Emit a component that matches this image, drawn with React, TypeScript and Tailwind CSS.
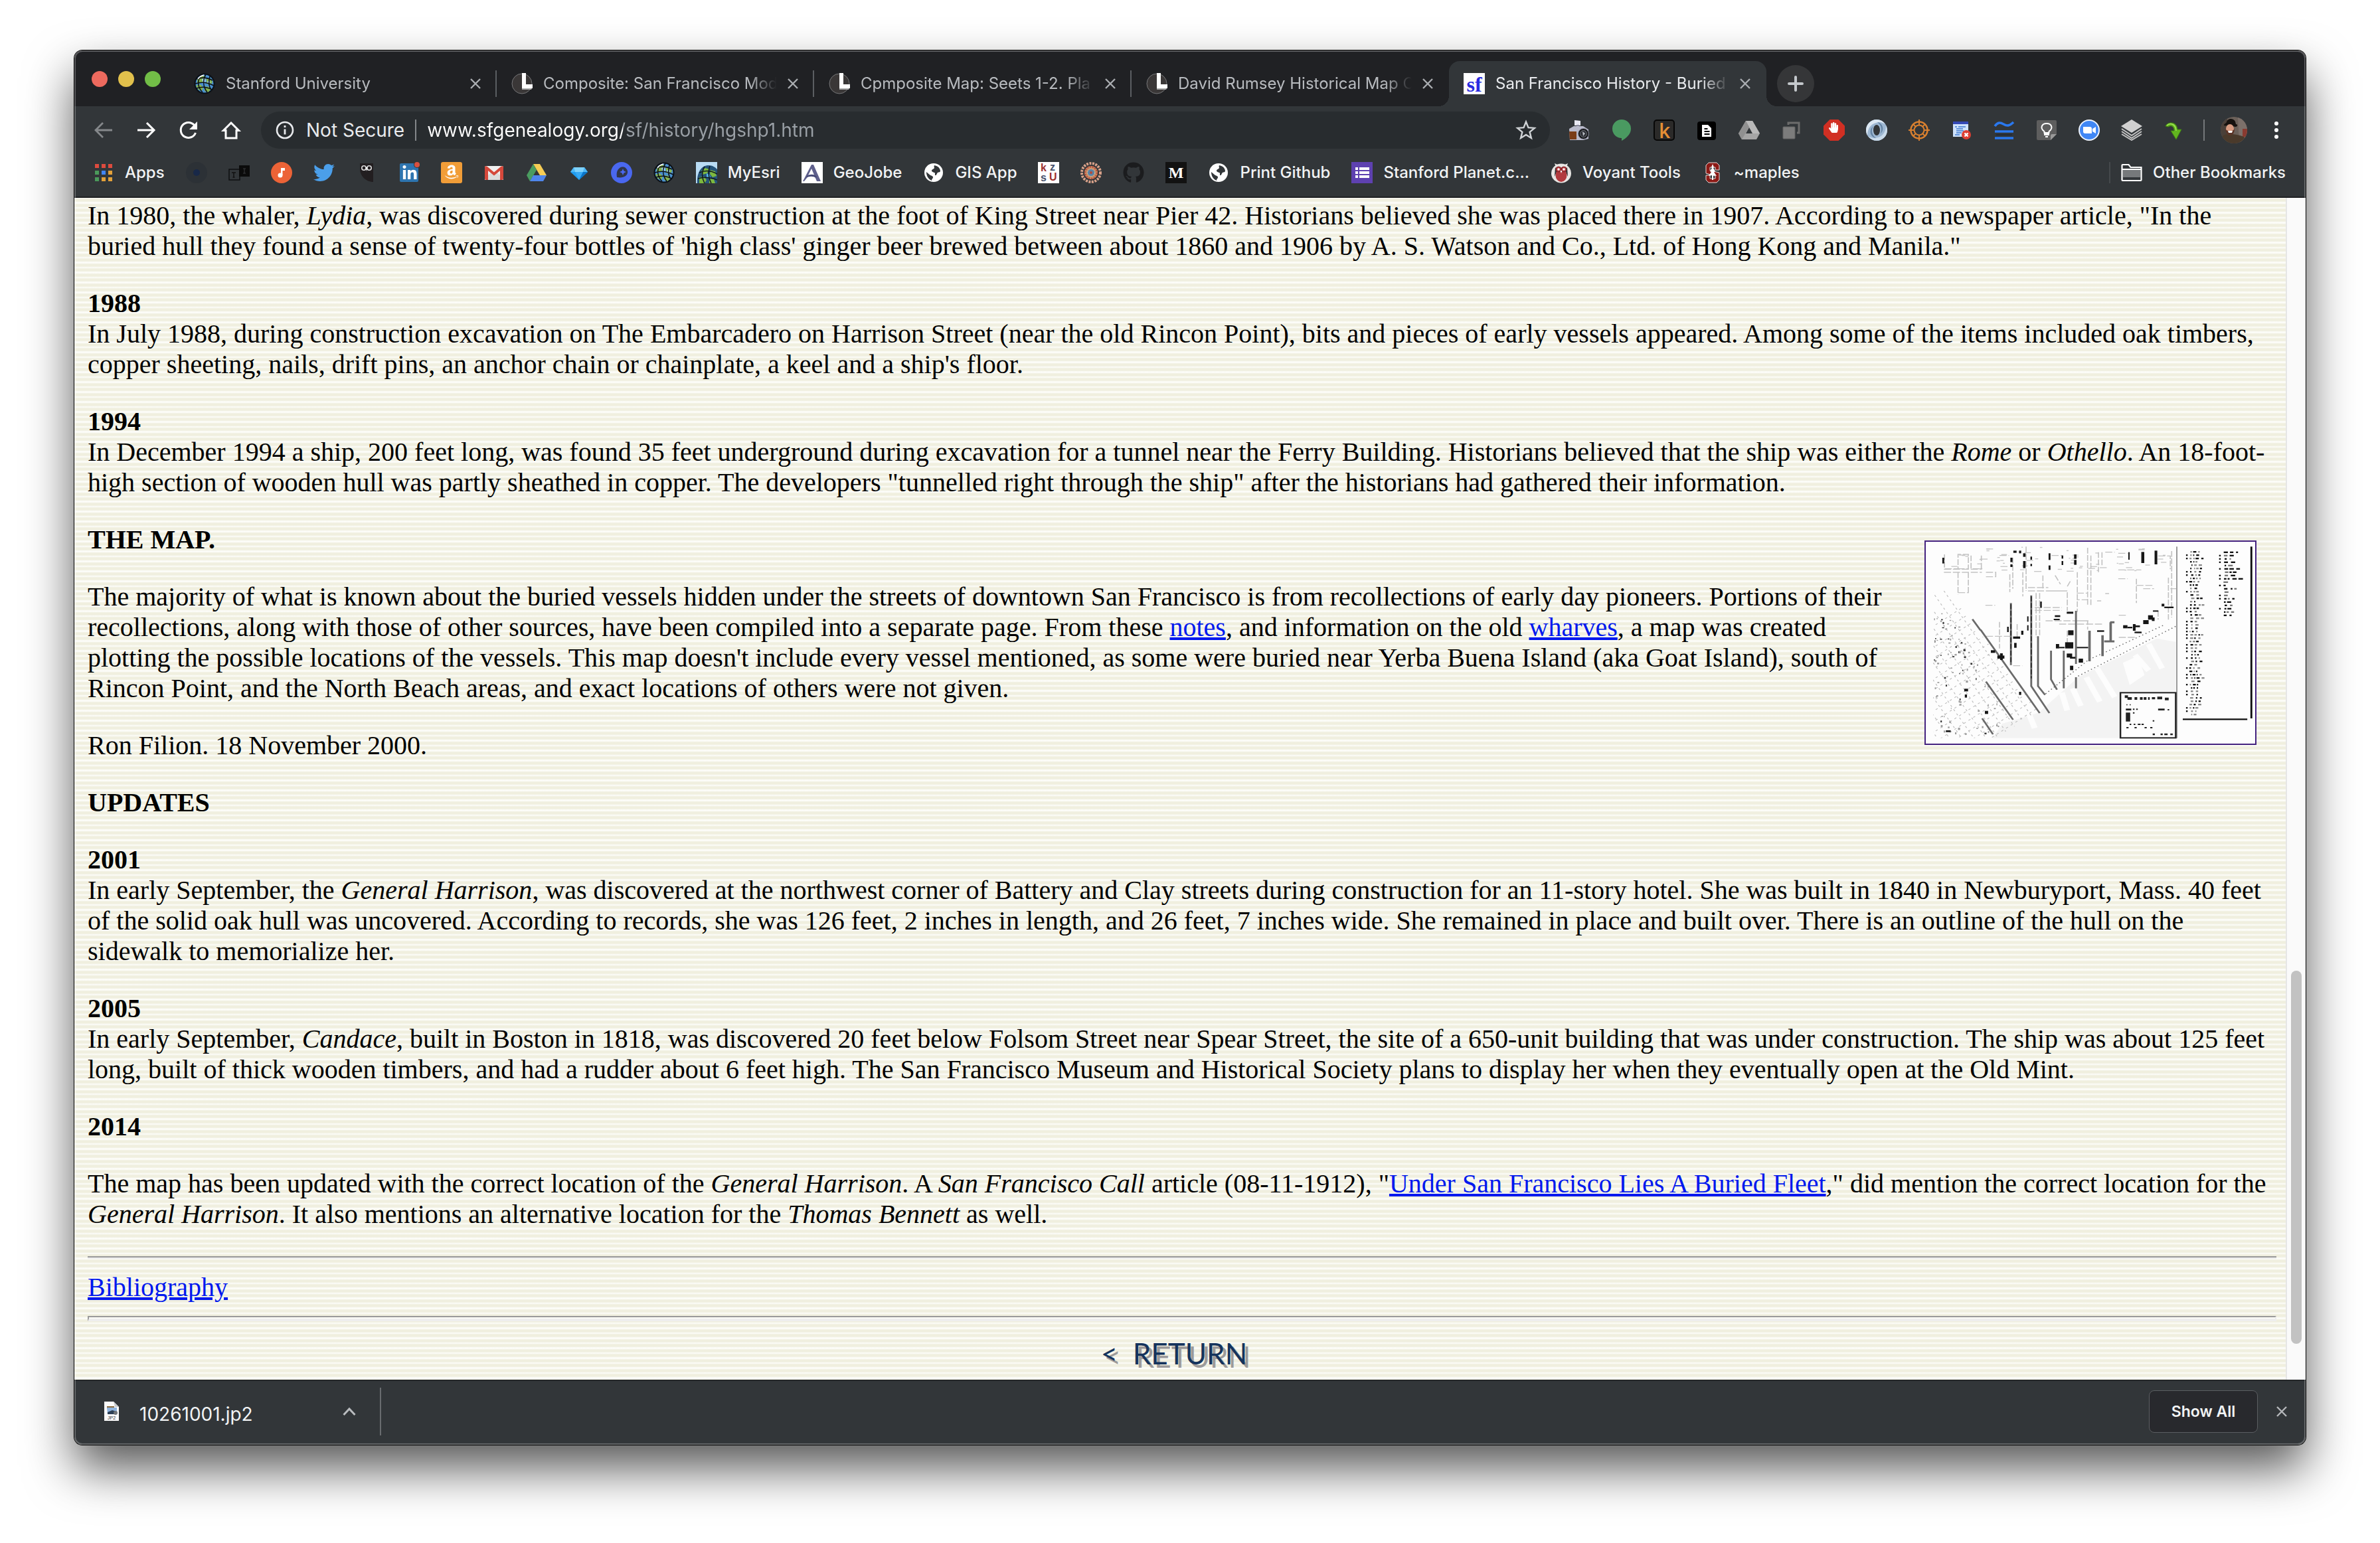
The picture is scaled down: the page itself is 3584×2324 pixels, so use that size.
import React from "react";
import { FaTwitter, FaGithub, FaHandPaper, FaAmazon, FaLinkedinIn } from "react-icons/fa";

type IconProps = { children: React.ReactNode; className?: string };

function Icon({ children, className = "size-8" }: IconProps) {
  return (
    <svg viewBox="0 0 32 32" className={`${className} shrink-0`} fill="none" aria-hidden="true">
      {children}
    </svg>
  );
}

/* ---------- favicons and bookmark icons ---------- */

function EsriGlobe() {
  return (
    <Icon>
      <circle cx="16" cy="16" r="15.5" fill="#0b1016" />
      <circle cx="16" cy="16" r="13.5" fill="#4a90cf" />
      <path d="M5 9l6-5 6 1 1 5-5 4-8 1zM19 9l6-1 3 6-4 4-5-2zM3 19l6-2 5 4-2 6-5-2zM17 20l6 1 3 3-5 5-5-2z" fill="#86b34c" />
      <path d="M12 9l5-1 1 5-4 2zM21 12l4 1-1 3-4-1z" fill="#9fd0f5" />
      <path d="M11 3C4 12 6 22 13 29M18 2c-5 9-4 19 2 27M24 5c-2 8-2 15 2 20M4 9c8-3 17-2 24 2M2 16c9-3 19-2 28 3M4 23c8-3 16-2 23 2" stroke="#0b1016" strokeWidth="1.6" />
      <path d="M6 9c2-3 5-5 9-6" stroke="#fff" strokeWidth="1.5" />
    </Icon>
  );
}

function LunaIcon() {
  return (
    <Icon>
      <circle cx="16" cy="16" r="15" fill="#3a3737" stroke="#77787a" />
      <path d="M16 0h6v17h10v6H16z" fill="#fff" />
      <path d="M16 23h15l-1 2H16z" fill="#aaa" />
    </Icon>
  );
}

function SfIcon() {
  return (
    <Icon>
      <rect width="32" height="32" fill="#fff" />
      <text x="16" y="28" textAnchor="middle" fontFamily="Liberation Serif" fontWeight="bold" fontSize="32" fill="#2a2be0">sf</text>
    </Icon>
  );
}

function AppsIcon() {
  const colors = ["#dd4b3e", "#dd4b3e", "#dd4b3e", "#4b9a5b", "#4285f4", "#e3a13a", "#4b9a5b", "#e3a13a", "#e3a13a"];
  return (
    <Icon>
      {colors.map((c, i) => (
        <rect key={i} x={3 + (i % 3) * 10} y={3 + Math.floor(i / 3) * 10} width="6" height="6" fill={c} />
      ))}
    </Icon>
  );
}

function DarkDot() {
  return (
    <Icon>
      <circle cx="16" cy="16" r="16" fill="#2c3136" />
      <circle cx="16" cy="16" r="5" fill="#182848" />
    </Icon>
  );
}

function TiIcon() {
  return (
    <Icon>
      <rect x="1" y="11" width="16" height="16" stroke="#0e0f10" strokeWidth="1.5" />
      <rect x="16" y="5" width="16" height="17" fill="#0b0b0b" />
      <path d="M5 16h6M8 16v7M6.5 23h3" stroke="#111" strokeWidth="1.5" />
      <path d="M22 10h4M24 10v7M22 17h4" stroke="#3b3d3f" />
    </Icon>
  );
}

function MusicIcon() {
  return (
    <Icon>
      <circle cx="16" cy="16" r="16" fill="#ec6337" />
      <circle cx="14" cy="20" r="3.5" fill="#fff" />
      <path d="M15 9h6v4h-3.500v7H15z" fill="#fff" />
    </Icon>
  );
}

function OwlIcon() {
  return (
    <Icon>
      <path d="M6 2h20v28c-11 0-20-9-20-20z" fill="#221e20" />
      <circle cx="12" cy="9" r="3.2" fill="#221e20" stroke="#ddd" strokeWidth="1.6" />
      <circle cx="20" cy="9" r="3.2" fill="#221e20" stroke="#ddd" strokeWidth="1.6" />
      <path d="M14.5 8h3L16 14z" fill="#fff" />
    </Icon>
  );
}

function LinkedInIcon() {
  return (
    <Icon>
      <rect x="2" y="2" width="28" height="28" rx="2" fill="#2e75b0" />
      <FaLinkedinIn x="5" y="5" width="22" height="22" color="#fff" />
      <circle cx="28" cy="4" r="5" fill="#323639" />
      <circle cx="28" cy="4" r="4" fill="#d9503f" />
    </Icon>
  );
}

function AmazonIcon() {
  return (
    <Icon>
      <rect width="32" height="32" rx="3" fill="#f19d38" />
      <FaAmazon x="4" y="3" width="24" height="27" color="#fff" />
    </Icon>
  );
}

function GmailIcon() {
  return (
    <Icon>
      <rect x="2" y="6" width="28" height="21" rx="2" fill="#f0f0f0" />
      <path d="M2 25l10-10 4 3 4-3 10 10v2H2z" fill="#dcdcdc" />
      <path d="M4 8l12 10L28 8" stroke="#d5483b" strokeWidth="4" />
      <path d="M2 8q0-2 2-2l3 3v18H4q-2 0-2-2zM30 8q0-2-2-2l-3 3v18h3q2 0 2-2z" fill="#d5483b" />
    </Icon>
  );
}

function DriveIcon() {
  return (
    <Icon>
      <path d="M11 3h10l10 17H21z" fill="#f6cd55" />
      <path d="M11 3l5 9L6 29 1 20z" fill="#4a9c60" />
      <path d="M11 20h20l-5 9H6z" fill="#4f86ec" />
    </Icon>
  );
}

function DiamondIcon() {
  return (
    <Icon>
      <path d="M8 8h16l5 7-13 12L3 15z" fill="#1e9cf0" />
      <path d="M8 8l2 7H3zM24 8l-2 7h7z" fill="#4db8f8" />
      <path d="M10 15h12l-6 12z" fill="#36a9f5" />
      <path d="M8 8h16l-2 7H10z" fill="#7fd2fb" />
      <path d="M22 15h7L16 27z" fill="#0b75c9" />
    </Icon>
  );
}

function MapboxIcon() {
  return (
    <Icon>
      <circle cx="16" cy="16" r="16" fill="#4a68f0" />
      <path d="M9 23c-1-6 0-10 3-13 4-4 9-3 11 0 3 3 3 8-1 11-3 2-7 3-13 2z" fill="#31364a" />
      <path d="M18 10l1.5 3.500L23 15l-3.500 1.500L18 20l-1.500-3.500L13 15l3.500-1.500z" fill="#4a68f0" />
    </Icon>
  );
}

function MyEsriIcon() {
  return (
    <Icon>
      <rect width="32" height="32" fill="#b9dcf4" />
      <path d="M2 32C1 16 8 5 19 5c6 0 10 3 13 6v21z" fill="#25547a" />
      <path d="M8 14l6-5 6 2-3 6-7 2zM22 12l7 2 2 7-6 2-4-5zM5 23l7-1 4 5-3 5H5zM20 25l7 1 2 6h-9z" fill="#7db93f" />
      <path d="M16 17l5 2 1 5-6-1z" fill="#54b2ea" />
      <path d="M13 7C8 15 9 25 13 32M21 6c-3 8-2 19 2 26M5 16c9-4 18-3 27 2M3 25c10-3 19-2 29 2" stroke="#101820" strokeWidth="1.5" />
    </Icon>
  );
}

function GeoJobeIcon() {
  return (
    <Icon>
      <rect width="32" height="32" fill="#fff" />
      <path d="M15 4h3l11 25h-6l-8-19-7 14-4 5H2z" fill="#5f608c" />
      <path d="M8 21c5-3 11-3 15 1l-1 2c-5-3-10-3-15 0z" fill="#474a78" />
    </Icon>
  );
}

function GlobeIcon() {
  return (
    <Icon>
      <circle cx="16" cy="16" r="14" fill="#fff" />
      <path d="M17 5c6 1 9 5 9 9-1 2-3 1-4 2-2 2-1 4-4 4v-3c0-2-5-1-5-4 0-2 3-2 4-4 0-1-1-2 0-4zM5 15l6 5c2 1 4 1 4 3s-2 2-2 5C8 26 5 21 5 15z" fill="#323639" />
    </Icon>
  );
}

function KzsuIcon() {
  return (
    <Icon>
      <rect width="32" height="32" fill="#fff" />
      <g fontFamily="Liberation Sans" fontWeight="bold" fontSize="16">
        <text x="4" y="14" fill="#9b2f2f">k</text>
        <text x="18" y="13" fill="#47526b">z</text>
        <text x="4" y="29" fill="#47526b">s</text>
        <text x="17" y="28" fill="#9b2f2f">U</text>
      </g>
    </Icon>
  );
}

function MandalaIcon() {
  return (
    <Icon>
      <circle cx="16" cy="16" r="14" stroke="#d9a28a" strokeWidth="4" strokeDasharray="3 1.5" />
      <circle cx="16" cy="16" r="10" fill="#c98a63" />
      <circle cx="16" cy="16" r="9" stroke="#b4493a" strokeWidth="2.5" strokeDasharray="2 2" />
      <circle cx="16" cy="16" r="5.5" fill="#5a83a5" stroke="#e4c39a" strokeDasharray="2 1" />
      <circle cx="16" cy="16" r="2" fill="#b4493a" />
    </Icon>
  );
}

function MediumIcon() {
  return (
    <Icon>
      <rect width="32" height="32" fill="#121212" />
      <text x="16" y="24" textAnchor="middle" fontFamily="Liberation Serif" fontWeight="bold" fontSize="24" fill="#fff">M</text>
    </Icon>
  );
}

function FormsIcon() {
  return (
    <Icon>
      <rect width="32" height="32" fill="#5e41b0" />
      <path d="M6 10h4M6 16h4M6 22h4M12 10h15M12 16h15M12 22h15" stroke="#fff" strokeWidth="4" />
    </Icon>
  );
}

function VoyantIcon() {
  return (
    <Icon>
      <ellipse cx="16" cy="17" rx="15" ry="14.5" fill="#e8e6e4" />
      <path d="M6 2l7 3h6l7-3-3 9H9z" fill="#e8e6e4" />
      <path d="M7 8l3 5-4 9zM25 8l-3 5 4 9z" fill="#2d2f31" />
      <ellipse cx="16" cy="20" rx="8.5" ry="10" fill="#b23a3e" />
      <circle cx="12" cy="11" r="4" fill="#b23a3e" stroke="#7d2327" />
      <circle cx="20" cy="11" r="4" fill="#b23a3e" stroke="#7d2327" />
      <circle cx="12" cy="11" r="1.8" fill="#fff" />
      <circle cx="20" cy="11" r="1.8" fill="#fff" />
      <path d="M14.5 13h3L16 17z" fill="#fff" />
    </Icon>
  );
}

function StanfordIcon() {
  return (
    <Icon>
      <path d="M10 1h12l4 4v7h-6V8h-8v5l14 3v11l-4 4H10l-4-4v-7h6v5h8v-4L6 17V5z" fill="#8c1a16" stroke="#e7d9d7" />
      <path d="M16 3l2 5-1 1 3 5-2 1 4 6-5-1v7h-2v-7l-5 1 4-6-2-1 3-5-1-1z" fill="#fff" />
    </Icon>
  );
}

function FolderIcon() {
  return (
    <Icon>
      <path d="M1.5 27V5q0-1 1-1h9l3 4h16v19q0 1-1 1h-27q-1 0-1-1z" stroke="#fff" strokeWidth="2.2" />
      <path d="M3 12h26v11H3z" fill="#76797b" />
      <path d="M2 11h28" stroke="#fff" strokeWidth="2" />
    </Icon>
  );
}

/* ---------- extension icons ---------- */

function CameraIcon() {
  return (
    <Icon>
      <path d="M9 1l9 1v7H9z" fill="#e9e9f4" />
      <path d="M12 8h4v4h-4z" fill="#8b8ba0" />
      <path d="M1 14l7-4h14l8 5v14l-8 2H2z" fill="#b9bacb" />
      <path d="M1 18h11v12H2z" fill="#7a3c17" />
      <circle cx="22.5" cy="21.5" r="8" fill="#16171a" stroke="#8d8fa0" />
      <circle cx="22.5" cy="21.5" r="5" fill="#2e3036" stroke="#71747c" />
      <path d="M21 18l4 3-3 4z" fill="#b9bcc4" />
    </Icon>
  );
}

function HangoutsIcon() {
  return (
    <Icon>
      <path d="M16 0a14 14 0 0 1 14 14c0 8-7 14-14 18v-4a14 14 0 0 1 0-28z" fill="#4a9a61" />
    </Icon>
  );
}

function KIcon() {
  return (
    <Icon>
      <rect x="1" y="1" width="30" height="30" rx="4" fill="#2b2a29" stroke="#060606" strokeWidth="2" />
      <text x="16.5" y="28" textAnchor="middle" fontFamily="Open Sans" fontWeight="600" fontSize="30" fill="#e58f35">k</text>
    </Icon>
  );
}

function DocIcon() {
  return (
    <Icon>
      <rect x="2" y="3" width="28" height="28" rx="4" fill="#000" />
      <path d="M9 8h9l5 5v13H9z" fill="#fff" />
      <path d="M12.5 14h5M12.5 18h8M12.5 22h8" stroke="#000" strokeWidth="2" />
    </Icon>
  );
}

function GrayDriveIcon() {
  return (
    <Icon>
      <path d="M11 2h10l11 19-5 9H5l-5-9z" fill="#a5a5a5" />
      <path d="M11 2h10l11 19H21z" fill="#b9b9b9" />
      <path d="M0 21L11 2l5 9L5 30z" fill="#909090" />
      <path d="M16 12l5 9H11z" fill="#323639" />
    </Icon>
  );
}

function StackSquaresIcon() {
  return (
    <Icon>
      <path d="M11 8V5h16v15h-3" stroke="#6c6c6c" strokeWidth="3" />
      <rect x="3" y="11" width="18" height="18" rx="1" fill="#7c7c7c" stroke="#626262" />
    </Icon>
  );
}

function BlockIcon() {
  return (
    <Icon>
      <path d="M9.5 0h13L32 9.500v13L22.500 32h-13L0 22.500v-13z" fill="#d12f23" />
      <FaHandPaper x="7" y="4" width="18" height="24" color="#fff" />
    </Icon>
  );
}

function RingIcon() {
  return (
    <Icon>
      <circle cx="16" cy="16" r="16" fill="#9db7d2" />
      <path d="M16 0a16 16 0 0 0-16 16c0 3 1 6 2 8C2 13 8 5 20 4c4 0 7 2 9 3A16 16 0 0 0 16 0z" fill="#dce8f3" />
      <path d="M16 32a16 16 0 0 0 16-16c0-3-1-5-2-7 0 11-6 18-17 19-4 0-7-1-10-3 3 4 8 7 13 7z" fill="#c9daea" />
      <path d="M11 10c-4 6-2 14 4 18-8-1-12-12-4-18zM21 22c4-6 2-14-4-18 8 1 12 12 4 18z" fill="#6484a4" />
      <ellipse cx="16" cy="16" rx="5" ry="8" fill="#323639" />
    </Icon>
  );
}

function TargetIcon() {
  return (
    <Icon>
      <circle cx="16" cy="16" r="12.5" stroke="#d9802f" strokeWidth="2.5" />
      <circle cx="16" cy="16" r="7.5" stroke="#d9802f" strokeWidth="2" />
      <path d="M16 0v9M16 23v9M0 16h9M23 16h9" stroke="#d9802f" strokeWidth="2" />
      <path d="M7 7l4 4M25 7l-4 4M7 25l4-4M25 25l-4-4" stroke="#d9802f" strokeWidth="2" />
    </Icon>
  );
}

function ListXIcon() {
  return (
    <Icon>
      <rect x="3" y="3" width="23" height="23" fill="#cfe2fb" />
      <rect x="3" y="3" width="23" height="4" fill="#3448b5" />
      <path d="M6 11h3M11 11h11M8 14h10M8 17h11M8 20h8M6 23h7" stroke="#3d78cf" strokeWidth="1.5" />
      <circle cx="23" cy="23" r="7" fill="#de3f33" />
      <path d="M20.5 20.500l5 5M25.500 20.500l-5 5" stroke="#fff" strokeWidth="2.4" />
    </Icon>
  );
}

function WavesIcon() {
  return (
    <Icon>
      <path d="M2 10c4-6 8-6 13-3s9 3 15-3" stroke="#2a78ee" strokeWidth="3.6" />
      <path d="M2 18h28M2 28h28" stroke="#2a78ee" strokeWidth="3.6" />
      <path d="M4 23h24" stroke="#232a38" strokeWidth="2" />
    </Icon>
  );
}

function BulbIcon() {
  return (
    <Icon>
      <path d="M3 1h26q2 0 2 2v19l-9 9H3q-2 0-2-2V3q0-2 2-2z" fill="#5e5e5e" />
      <path d="M31 22l-9 9v-7q0-2 2-2z" fill="#999" />
      <path d="M12.5 20v-2c-7-5-4-12 3.500-12s10.500 7 3.500 12v2z" stroke="#fff" strokeWidth="2" />
      <path d="M12 20h8v4h-8zM14 25h4v2h-4z" fill="#fff" />
    </Icon>
  );
}

function ZoomIcon() {
  return (
    <Icon>
      <circle cx="16" cy="16" r="15" fill="#4087f5" stroke="#eef4ff" strokeWidth="2" />
      <path d="M7 11h10q3 0 3 3v7h-10q-3 0-3-3zM21 14l5-3v10l-5-3z" fill="#fff" />
    </Icon>
  );
}

function LayersIcon() {
  return (
    <Icon>
      <path d="M16 0l16 10-16 10L0 10z" fill="#d0d0d0" />
      <path d="M1 14l15 10 15-10M1 18l15 10 15-10M1 22l15 9 15-9" stroke="#c2c2c2" strokeWidth="2" />
    </Icon>
  );
}

function GreenArrowIcon() {
  return (
    <Icon>
      <path d="M3 10C6 3 20 2 21 15h6l-8 15-8-13h5c0-7-5-9-9-6z" fill="#62b51f" stroke="#3f7f12" />
      <path d="M5 9c4-4 13-4 14 8" stroke="#a3e35a" strokeWidth="1.5" />
    </Icon>
  );
}

function AvatarIcon() {
  return (
    <svg viewBox="0 0 40 40" className="size-10 shrink-0 rounded-full" aria-hidden="true">
      <rect width="40" height="40" fill="#6b6059" />
      <path d="M26 0h14v40H28z" fill="#7c706a" />
      <path d="M33 18h7v12h-7z" fill="#8a3a30" />
      <path d="M0 0h10v30H0z" fill="#4a4039" />
      <path d="M0 34c3-8 8-8 14-8s20 1 26 8v6H0z" fill="#4a3a2b" />
      <path d="M5 13c0-3 3-3 4-5 1-6 10-7 13-1l1 4c3 0 3 3 0 4z" fill="#16120f" />
      <ellipse cx="14" cy="18" rx="6" ry="7" fill="#d79a80" />
      <path d="M7 18c1 6 3 10 7 10s7-4 7-10c-2 3-4 3-7 3s-5 0-7-3z" fill="#5a3527" />
      <path d="M11 21h7l-1 3h-5z" fill="#fff" />
    </svg>
  );
}

/* ---------- generic glyphs ---------- */

function CloseGlyph() {
  return (
    <svg viewBox="0 0 16 16" className="size-4" aria-hidden="true">
      <path d="M1 1l14 14M15 1L1 15" stroke="currentColor" strokeWidth="2.4" />
    </svg>
  );
}

/* ---------- data ---------- */

const tabs = [
  { title: "Stanford University", icon: <EsriGlobe /> },
  { title: "Composite: San Francisco Mod", icon: <LunaIcon /> },
  { title: "Cpmposite Map: Seets 1-2. Pla", icon: <LunaIcon /> },
  { title: "David Rumsey Historical Map C", icon: <LunaIcon /> },
  { title: "San Francisco History - Buried", icon: <SfIcon />, active: true },
];

const extensions = [
  { name: "Screenshot", icon: <CameraIcon /> },
  { name: "Hangouts", icon: <HangoutsIcon /> },
  { name: "Kindle", icon: <KIcon /> },
  { name: "Notes", icon: <DocIcon /> },
  { name: "Drive", icon: <GrayDriveIcon /> },
  { name: "Copy", icon: <StackSquaresIcon /> },
  { name: "Ad blocker", icon: <BlockIcon /> },
  { name: "Ring", icon: <RingIcon /> },
  { name: "Target", icon: <TargetIcon /> },
  { name: "Clear list", icon: <ListXIcon /> },
  { name: "Waves", icon: <WavesIcon /> },
  { name: "Keep", icon: <BulbIcon /> },
  { name: "Meetings", icon: <ZoomIcon /> },
  { name: "Layers", icon: <LayersIcon /> },
  { name: "Download", icon: <GreenArrowIcon /> },
];

const bookmarks: { name: string; label?: boolean; icon: React.ReactNode }[] = [
  { name: "Apps", label: true, icon: <AppsIcon /> },
  { name: "Dot", icon: <DarkDot /> },
  { name: "TI", icon: <TiIcon /> },
  { name: "Music", icon: <MusicIcon /> },
  { name: "Twitter", icon: <FaTwitter className="size-8 shrink-0 text-[#4b9fea]" /> },
  { name: "Owl", icon: <OwlIcon /> },
  { name: "LinkedIn", icon: <LinkedInIcon /> },
  { name: "Amazon", icon: <AmazonIcon /> },
  { name: "Gmail", icon: <GmailIcon /> },
  { name: "Drive", icon: <DriveIcon /> },
  { name: "Diamond", icon: <DiamondIcon /> },
  { name: "Mapbox", icon: <MapboxIcon /> },
  { name: "Esri", icon: <EsriGlobe /> },
  { name: "MyEsri", label: true, icon: <MyEsriIcon /> },
  { name: "GeoJobe", label: true, icon: <GeoJobeIcon /> },
  { name: "GIS App", label: true, icon: <GlobeIcon /> },
  { name: "KZSU", icon: <KzsuIcon /> },
  { name: "Mandala", icon: <MandalaIcon /> },
  { name: "GitHub", icon: <FaGithub className="size-8 shrink-0 text-[#1b1c1e]" /> },
  { name: "Medium", icon: <MediumIcon /> },
  { name: "Print Github", label: true, icon: <GlobeIcon /> },
  { name: "Stanford Planet.c...", label: true, icon: <FormsIcon /> },
  { name: "Voyant Tools", label: true, icon: <VoyantIcon /> },
  { name: "~maples", label: true, icon: <StanfordIcon /> },
];

/* ---------- browser chrome ---------- */

function TabStrip() {
  return (
    <div className="flex h-21 items-end bg-[#202124] pl-[26px]">
      <div className="flex h-full w-[132px] items-center gap-4 pt-[2px]">
        <button aria-label="Close window" className="size-6 rounded-full bg-[#ed6a5e]" />
        <button aria-label="Minimize window" className="size-6 rounded-full bg-[#e1c04c]" />
        <button aria-label="Zoom window" className="size-6 rounded-full bg-[#72be47]" />
      </div>
      <div role="tablist" className="flex">
        {tabs.map((tab, i) => (
          <div
            key={tab.title}
            className={
              tab.active
                ? "relative flex h-17 w-[478px] items-center gap-4 rounded-t-2xl bg-[#323639] pr-6 pl-[22px] text-[#e8eaed]"
                : "relative flex h-17 w-[478px] items-center gap-4 pr-6 pl-[22px] text-[#b8bbbf]"
            }
          >
            {tab.icon}
            <button
              role="tab"
              aria-selected={!!tab.active}
              className="min-w-0 flex-1 overflow-hidden mask-r-from-88% text-left text-[24px] whitespace-nowrap"
            >
              {tab.title}
            </button>
            <button aria-label={`Close ${tab.title}`} className="shrink-0 text-[#aaadb1]">
              <CloseGlyph />
            </button>
            {i < 3 && <span className="absolute right-0 h-10 w-[2px] bg-[#5b5e62]" />}
            {tab.active && (
              <>
                <span className="absolute right-full bottom-0 size-4 bg-[radial-gradient(circle_at_top_left,transparent_16px,#323639_16px)]" />
                <span className="absolute bottom-0 left-full size-4 bg-[radial-gradient(circle_at_top_right,transparent_16px,#323639_16px)]" />
              </>
            )}
          </div>
        ))}
      </div>
      <button aria-label="New tab" className="mb-1.5 ml-4 grid size-14 place-items-center rounded-full bg-[#353638] text-[#c3c7cb]">
        <svg viewBox="0 0 24 24" className="size-6" aria-hidden="true">
          <path d="M12 2v20M2 12h20" stroke="currentColor" strokeWidth="4" strokeLinecap="round" />
        </svg>
      </button>
    </div>
  );
}

function Toolbar() {
  return (
    <div className="flex h-18 items-center bg-[#323639] px-3 text-white">
      <button aria-label="Back" className="grid w-16 place-items-center text-[#85888b]">
        <Icon>
          <path d="M29 16H5M15 5L4 16l11 11" stroke="currentColor" strokeWidth="2.8" />
        </Icon>
      </button>
      <button aria-label="Forward" className="grid w-16 place-items-center">
        <Icon>
          <path d="M3 16h24M17 5l11 11-11 11" stroke="currentColor" strokeWidth="3" />
        </Icon>
      </button>
      <button aria-label="Reload" className="grid w-16 place-items-center">
        <Icon>
          <path d="M26.5 20A11.500 11.500 0 1 1 24.500 8.500" stroke="currentColor" strokeWidth="3" />
          <path d="M29 3v12H17z" fill="currentColor" />
        </Icon>
      </button>
      <button aria-label="Home" className="grid w-16 place-items-center">
        <Icon>
          <path d="M4.5 16.500L16 5l11.500 11.500H24V28H8V16.500z" stroke="currentColor" strokeWidth="3" />
        </Icon>
      </button>
      <div className="ml-[13px] flex h-14 min-w-0 flex-1 items-center rounded-full bg-[#282c2f] px-5 text-[28px]">
        <Icon>
          <circle cx="16" cy="16" r="12" stroke="#e8eaed" strokeWidth="2.6" />
          <path d="M16 14.5v8M16 9v3" stroke="#e8eaed" strokeWidth="2.8" />
        </Icon>
        <span className="ml-4 whitespace-nowrap text-[#e8eaed]">Not Secure</span>
        <span className="mx-4 h-8 w-[2px] bg-[#84878a]" />
        <input
          aria-label="Address"
          readOnly
          value="www.sfgenealogy.org/sf/history/hgshp1.htm"
          className="h-full min-w-0 flex-1 bg-[linear-gradient(90deg,#fff_295px,#9aa0a6_295px)] bg-clip-text text-transparent outline-none"
        />
        <button aria-label="Bookmark this page">
          <Icon>
            <path d="M16 3.5l3.500 8.700 9.300.700-7.200 6 2.300 9.100L16 23l-7.900 5 2.300-9.100-7.200-6 9.300-.700z" stroke="#d0d3d6" strokeWidth="2.4" />
          </Icon>
        </button>
      </div>
      <div className="ml-3 flex">
        {extensions.map((e) => (
          <button key={e.name} aria-label={e.name} className="grid w-16 place-items-center">
            {e.icon}
          </button>
        ))}
      </div>
      <span className="mx-3 h-8 w-[2px] bg-[#75787a]" />
      <button aria-label="Profile" className="grid w-16 place-items-center">
        <AvatarIcon />
      </button>
      <button aria-label="Menu" className="grid w-16 place-items-center">
        <Icon>
          <circle cx="16" cy="6" r="3" fill="#fff" />
          <circle cx="16" cy="16" r="3" fill="#fff" />
          <circle cx="16" cy="26" r="3" fill="#fff" />
        </Icon>
      </button>
    </div>
  );
}

function BookmarksBar() {
  return (
    <nav className="flex h-[66px] items-center border-b-2 border-[#1f2123] bg-[#323639] pr-[14px] pb-2 pl-3 text-[24px] font-medium text-[#f1f3f4]">
      {bookmarks.map((b) => (
        <a key={b.name} href="#" aria-label={b.name} className="flex shrink-0 items-center gap-4 px-4 whitespace-nowrap">
          {b.icon}
          {b.label && <span>{b.name}</span>}
        </a>
      ))}
      <span className="ml-auto h-8 w-[2px] bg-[#45494c]" />
      <a href="#" className="flex shrink-0 items-center gap-4 pr-4 pl-4 whitespace-nowrap">
        <FolderIcon />
        <span>Other Bookmarks</span>
      </a>
    </nav>
  );
}

/* ---------- page ---------- */

function seeded(seed: number) {
  let s = seed;
  return () => {
    s = (s * 16807) % 2147483647;
    return s / 2147483647;
  };
}

function MapDrawing() {
  const rnd = seeded(42);
  const legend: React.ReactNode[] = [];
  for (let y = 120; y < 860; y += 15) {
    if (rnd() > 0.4) legend.push(<rect key={`a${y}`} x={1058} y={y} width="6" height="7" />);
    let x = 1070 + rnd() * 8;
    const end = 1095 + rnd() * 30;
    while (x < end) {
      const w = 3 + rnd() * 9;
      legend.push(<rect key={`b${y}-${x}`} x={x} y={y} width={w} height="7" fill={rnd() > 0.5 ? "#111" : "#8a8a8a"} />);
      x += w + 3 + rnd() * 8;
    }
  }
  for (let y = 122; y < 410; y += 15) {
    if (rnd() > 0.5) legend.push(<rect key={`c${y}`} x={1180} y={y} width="6" height="7" />);
    let x = 1196 + rnd() * 6;
    const end = 1205 + rnd() * 50;
    while (x < end) {
      const w = 5 + rnd() * 12;
      legend.push(<rect key={`d${y}-${x}`} x={x} y={y} width={w} height="7" fill={rnd() > 0.4 ? "#111" : "#777"} />);
      x += w + 4 + rnd() * 8;
    }
  }
  const specks: React.ReactNode[] = [];
  for (let i = 0; i < 95; i++) {
    const y = 400 + rnd() * 550;
    const x = 128 + rnd() * (60 + (y - 380) * 0.4);
    specks.push(<rect key={`s${i}`} x={x} y={y} width={3 + rnd() * 5} height={4 + rnd() * 6} fill={rnd() > 0.7 ? "#333" : "#9d9d9d"} />);
  }
  for (let i = 0; i < 60; i++) {
    specks.push(<rect key={`t${i}`} x={165 + rnd() * 830} y={100 + rnd() * 110} width={4 + rnd() * 24} height="4" fill="#c6c6c6" />);
  }
  const darks: [number, number, number, number][] = [
    [159, 150, 7, 26], [410, 150, 8, 20], [410, 180, 8, 12], [457, 130, 9, 16], [457, 165, 9, 32], [484, 145, 6, 14],
    [484, 178, 6, 10], [551, 130, 7, 30], [551, 185, 7, 20], [599, 140, 6, 14], [599, 165, 6, 18], [645, 135, 9, 20],
    [645, 160, 9, 22], [845, 125, 5, 34], [893, 124, 11, 50], [942, 118, 10, 32], [942, 150, 10, 30], [421, 118, 12, 10],
    [442, 118, 8, 12], [420, 506, 26, 10], [398, 462, 6, 24], [424, 535, 9, 22], [450, 480, 8, 18], [520, 348, 6, 28],
    [618, 394, 24, 9], [574, 410, 20, 8], [570, 426, 22, 6], [623, 478, 20, 22], [578, 540, 12, 20], [590, 553, 20, 6],
    [612, 532, 30, 28], [655, 553, 42, 6], [618, 583, 20, 18], [630, 598, 20, 8], [662, 606, 16, 18], [630, 638, 12, 20],
    [826, 455, 16, 14], [842, 462, 18, 7], [862, 450, 10, 30], [870, 456, 18, 8], [868, 484, 26, 7], [900, 432, 20, 18],
    [918, 410, 18, 20], [932, 420, 10, 16], [936, 388, 20, 6], [978, 371, 34, 7], [968, 358, 10, 12], [338, 568, 16, 12],
    [362, 592, 26, 14], [372, 582, 10, 30], [172, 930, 18, 8], [316, 842, 12, 14], [442, 756, 8, 14], [730, 478, 26, 7],
    [240, 742, 14, 12], [242, 768, 8, 14], [472, 415, 5, 24], [472, 455, 5, 24],
  ];
  return (
    <svg viewBox="98 78 1215 912" preserveAspectRatio="none" fill="none" className="block h-[304px] w-[496px] bg-[#fdfdfd]" role="img" aria-label="Map of buried ships">
      <defs>
        <clipPath id="southOfMarket">
          <path d="M125 200L205 340 270 440 515 850 350 965 125 965z" />
        </clipPath>
      </defs>
      <path d="M345 965L380 900 515 850 660 690 950 515 1020 530V965z" fill="#f3f3f3" />
      <g stroke="#fdfdfd" strokeWidth="22">
        <path d="M690 690l50 110M730 650l65 130M870 590l50 70M920 540l50 110M600 760l20 80M640 740l30 80M480 860l20 60" />
      </g>
      <path d="M825 625l55-30 25 85-55 45z" fill="#fdfdfd" />
      <g clipPath="url(#southOfMarket)" stroke="#bdbdbd" strokeWidth="3" strokeDasharray="9 13">
        {Array.from({ length: 14 }, (_, i) => (
          <path key={`x${i}`} d={`M${-330 + i * 45} 300l400 700`} />
        ))}
        {Array.from({ length: 16 }, (_, i) => (
          <path key={`y${i}`} d={`M100 ${480 + i * 48}l420-330`} />
        ))}
      </g>
      {specks}
      <g stroke="#c2c2c2" strokeWidth="4" strokeDasharray="26 7">
        <path d="M167 135v65h50v-65h38v65h-38M265 140v60h38v-60M165 202h140M165 216h140M217 216v100M255 216v90M217 308h40M320 216h36v20h-36M370 140h35M408 225v80M419 150v140M456 215v110M468 100v200M505 310v200M518 310v190M530 230v60M475 285h75M475 300h145M500 375h100M500 388h100M540 435h160M590 450h160M655 310h40v30h-40M695 105v260M707 140v230M657 215v180M655 435h40v40M735 125v90M748 125v60M760 125h35M808 130h35M808 205h85M808 245h35M875 245v110M875 275h65M900 290h40M810 410h30M810 510h60M875 490h20M993 240v190M1005 120v300M955 390v40M1000 290h25M955 142h45v60M318 365h36M320 505h90M370 440v120M435 450v60M420 638h34M560 300h60v90M562 140h40M575 230l20 40M620 280l14-30M620 480v60M730 345h15M760 312h14" />
      </g>
      <g stroke="#6a6a6a" strokeWidth="7">
        <path d="M300 475L518 852M270 428l30 50M320 710l100 172M306 876l40 72" />
        <path d="M487 320V730l67 122M512 505v225l26 40" />
        <path d="M412 355v280M560 570v130l22 46M607 570v170M652 390v240M652 690v50" />
        <path d="M702 480v138M750 500v95M780 442v90M756 528h38M778 442h16" strokeWidth="9" />
      </g>
      <path d="M412 360v270M487 325v370" stroke="#222" strokeWidth="4" strokeDasharray="22 8" />
      <path d="M540 765L700 610 800 555 975 455M660 685L1020 460" stroke="#666" strokeWidth="4" strokeDasharray="4 10" />
      {darks.map(([x, y, w, h]) => (
        <rect key={`${x}-${y}`} x={x} y={y} width={w} height={h} fill="#161616" />
      ))}
      <path d="M1024 100V965" stroke="#9c9c9c" strokeWidth="5" />
      <path d="M1299 100V876M1046 880H1284" stroke="#0e0e0e" strokeWidth="7" />
      <g fill="#111">{legend}</g>
      <rect x="816" y="760" width="204" height="204" fill="#fdfdfd" stroke="#222" strokeWidth="6" />
      <path d="M832 778h12M842 786h16M868 786h10M888 786h10M902 786h10M918 786h6M938 780v10M952 784h18M980 788h14" stroke="#222" strokeWidth="12" />
      <g fill="#222">
        <path d="M836 832h20v8h-20zM836 850h16v40h-16zM862 832h6v6h-6zM874 832h6v6h-6zM862 848h6v6h-6zM955 832h24v8h-24zM990 834h6v6h-6zM838 812h4v5h-4zM850 812h4v5h-4zM850 900h6v6h-6zM865 900h6v6h-6zM880 900h10v6h-10zM894 900h8v6h-8zM838 915h8v6h-8zM868 915h8v6h-8zM905 915h8v6h-8zM926 915h8v6h-8zM935 884h6v6h-6zM935 944h8v8h-8zM964 944h8v8h-8zM978 944h12v8h-12zM1000 944h9v8h-9z" />
      </g>
    </svg>
  );
}

function Link({ children }: { children: React.ReactNode }) {
  return (
    <a href="#" className="text-[#0018ee] underline decoration-4 underline-offset-2">
      {children}
    </a>
  );
}

function Article() {
  return (
    <main className="min-w-0 flex-1 bg-[linear-gradient(#fdfdfa_0px,#f0efdf_2px,#f0efdf_5px,#fdfdfa_7px,#fdfdfa_8px,#f0efdf_10px,#f0efdf_13px,#fdfdfa_15px)] bg-[length:15px_15px] pt-1 pr-[14px] pl-5 font-['Liberation_Serif',serif] text-[40px] leading-[46px] text-black">
      <p className="mb-10">
        In 1980, the whaler, <i>Lydia</i>, was discovered during sewer construction at the foot of King Street near Pier 42. Historians believed she was placed there in 1907. According to a newspaper article, "In the buried hull they found a sense of twenty-four bottles of 'high class' ginger beer brewed between about 1860 and 1906 by A. S. Watson and Co., Ltd. of Hong Kong and Manila."
      </p>
      <p className="mb-10">
        <b>1988</b>
        <br />
        In July 1988, during construction excavation on The Embarcadero on Harrison Street (near the old Rincon Point), bits and pieces of early vessels appeared. Among some of the items included oak timbers, copper sheeting, nails, drift pins, an anchor chain or chainplate, a keel and a ship's floor.
      </p>
      <p className="mb-10">
        <b>1994</b>
        <br />
        In December 1994 a ship, 200 feet long, was found 35 feet underground during excavation for a tunnel near the Ferry Building. Historians believed that the ship was either the <i>Rome</i> or <i>Othello</i>. An 18-foot-high section of wooden hull was partly sheathed in copper. The developers "tunnelled right through the ship" after the historians had gathered their information.
      </p>
      <a href="#" className="float-right mt-6 mr-[30px] ml-[30px] border-2 border-[#44227f]">
        <MapDrawing />
      </a>
      <p className="mb-10 font-bold">THE MAP.</p>
      <p className="mb-10">
        The majority of what is known about the buried vessels hidden under the streets of downtown San Francisco is from recollections of early day pioneers. Portions of their recollections, along with those of other sources, have been compiled into a separate page. From these <Link>notes</Link>, and information on the old <Link>wharves</Link>, a map was created plotting the possible locations of the vessels. This map doesn't include every vessel mentioned, as some were buried near Yerba Buena Island (aka Goat Island), south of Rincon Point, and the North Beach areas, and exact locations of others were not given.
      </p>
      <p className="mb-10">Ron Filion. 18 November 2000.</p>
      <p className="mb-10 font-bold">UPDATES</p>
      <p className="mb-10">
        <b>2001</b>
        <br />
        In early September, the <i>General Harrison</i>, was discovered at the northwest corner of Battery and Clay streets during construction for an 11-story hotel. She was built in 1840 in Newburyport, Mass. 40 feet of the solid oak hull was uncovered. According to records, she was 126 feet, 2 inches in length, and 26 feet, 7 inches wide. She remained in place and built over. There is an outline of the hull on the sidewalk to memorialize her.
      </p>
      <p className="mb-10">
        <b>2005</b>
        <br />
        In early September, <i>Candace</i>, built in Boston in 1818, was discovered 20 feet below Folsom Street near Spear Street, the site of a 650-unit building that was under construction. The ship was about 125 feet long, built of thick wooden timbers, and had a rudder about 6 feet high. The San Francisco Museum and Historical Society plans to display her when they eventually open at the Old Mint.
      </p>
      <p className="mb-10 font-bold">2014</p>
      <p className="mb-10">
        The map has been updated with the correct location of the <i>General Harrison</i>. A <i>San Francisco Call</i> article (08-11-1912), "<Link>Under San Francisco Lies A Buried Fleet</Link>," did mention the correct location for the <i>General Harrison</i>. It also mentions an alternative location for the <i>Thomas Bennett</i> as well.
      </p>
      <hr className="h-1 border-0 border-t-2 border-t-[#9a9a9a] bg-[#eeeeee]" />
      <p className="my-5">
        <Link>Bibliography</Link>
      </p>
      <hr className="h-2 border-t-2 border-r-2 border-b-4 border-l-2 border-t-[#9a9a9a] border-r-[#eeeeee] border-b-[#eeeeee] border-l-[#9a9a9a]" />
      <div className="flex h-[88px] items-center justify-center pt-2 pr-6">
        <a href="#" className="font-['Lato',sans-serif] text-[44px] whitespace-pre text-[#14335c] text-shadow-[5px_5px_0_#9c9a9a]">
          {"<  RETURN"}
        </a>
      </div>
    </main>
  );
}

function DownloadBar() {
  return (
    <footer className="flex h-[98px] items-center border-t-2 border-[#242729] bg-[#323639] pr-7 pb-1 pl-[42px] text-[#f1f3f4]">
      <button className="flex w-[352px] items-center text-[28px]">
        <svg viewBox="0 0 28 32" className="w-7" aria-hidden="true">
          <path d="M3 1h14l8 8v21H3z" fill="#fbfbfb" />
          <path d="M17 1l8 8h-6z" fill="#c9cbcd" />
          <path d="M7 8h11v4H7z" fill="#8a6a3c" />
          <path d="M7 10h15v10H8z" fill="#8fb3dd" />
          <path d="M8 17l7-3 7 2v4H8z" fill="#2d4056" />
          <circle cx="20" cy="18" r="3" fill="#71757a" />
          <text x="14" y="28" textAnchor="middle" fontFamily="Liberation Sans" fontSize="7" fill="#333">JP2</text>
        </svg>
        <span className="pt-2 pl-7">10261001.jp2</span>
      </button>
      <button aria-label="Download options" className="ml-[10px] text-[#b9bcbf]">
        <svg viewBox="0 0 20 14" className="w-5" aria-hidden="true">
          <path d="M1.5 12L10 3l8.500 9" stroke="currentColor" strokeWidth="3" fill="none" />
        </svg>
      </button>
      <span className="ml-9 h-18 w-[2px] bg-[#686b6e]" />
      <button className="mr-7 ml-auto h-16 w-41 rounded-lg border border-[#5b5e61] bg-[#28292d] text-[23px] font-semibold">Show All</button>
      <button aria-label="Close downloads bar" className="text-[#b4b7ba]">
        <CloseGlyph />
      </button>
    </footer>
  );
}

export default function App() {
  return (
    <div className="min-h-screen bg-white px-28 pt-[76px] pb-[148px] font-['Inter',sans-serif]">
      <div className="relative overflow-hidden rounded-xl shadow-[0_0_0_1px_#000,0_36px_72px_rgba(0,0,0,0.66)]">
        <TabStrip />
        <Toolbar />
        <BookmarksBar />
        <div className="flex">
          <Article />
          <div className="w-[30px] border-l-2 border-[#e6e6e6] bg-[#fafafa] px-1.5 pt-[1164px]">
            <div className="h-[562px] w-4 rounded-full bg-[#c2c2c2]" />
          </div>
        </div>
        <DownloadBar />
        <div className="pointer-events-none absolute inset-0 rounded-xl shadow-[inset_0_0_0_2px_rgba(255,255,255,0.25)]" />
      </div>
    </div>
  );
}
